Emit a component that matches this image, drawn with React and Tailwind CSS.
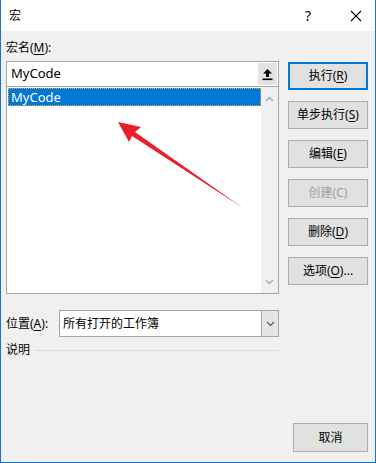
import React from 'react';

const font = { fontFamily: '"Noto Sans", "Noto Sans CJK SC", sans-serif' };

const Btn = ({ children, primary, disabled }) => (
  <button
    className={`w-[80px] h-[28px] flex items-center justify-center text-[12px] bg-[#e1e1e1] ${
      primary ? 'border-2 border-[#0078d7]' : 'border border-[#adadad]'
    } ${disabled ? 'text-[#a0a0a0]' : 'text-black'}`}
  >
    {children}
  </button>
);

const U = ({ children }) => <span className="underline underline-offset-2">{children}</span>;

const Chevron = ({ down }) => (
  <svg width="9" height="6" viewBox="0 0 9 6">
    <path d={down ? 'M1 1 L4.5 4.5 L8 1' : 'M1 5 L4.5 1.5 L8 5'} fill="none" stroke="#a6a6a6" strokeWidth="1.3" />
  </svg>
);

export default function App() {
  return (
    <div style={font} className="w-[376px] h-[463px] flex flex-col bg-[#f0f0f0] border-l border-r border-b border-[#1a73c8] text-black">
      {/* Title bar */}
      <div className="h-[31px] bg-white flex items-center pl-[8px] text-[12px]">
        <span className="flex-1">宏</span>
        <span className="w-[20px] text-center text-[14px] mr-[32px]">?</span>
        <svg width="12" height="12" viewBox="0 0 12 12" className="mr-[13px]">
          <path d="M1 1 L11 11 M11 1 L1 11" stroke="#000" strokeWidth="1.1" />
        </svg>
      </div>

      {/* Body */}
      <div className="flex-1 relative flex pl-[5px] pr-[7px]">
        <div className="w-[273px] flex flex-col">
          <div className="pt-[9px] h-[30px] leading-[16px] text-[12px]">
            宏名(<U>M</U>):
          </div>
          {/* Name input */}
          <div className="h-[26px] flex items-center bg-white border border-[#a6a6a6] pl-[4px] pr-[1px]">
            <span className="flex-1 text-[13px]">MyCode</span>
            <div className="w-[19px] h-[22px] bg-[#e3e3e3] flex items-center justify-center">
              <svg width="11" height="13" viewBox="0 0 11 13">
                <path d="M5.5 1 L10 5.5 L7 5.5 L7 9 L4 9 L4 5.5 L1 5.5 Z" fill="#000" />
                <rect x="0.5" y="10.5" width="10" height="1.6" fill="#000" />
              </svg>
            </div>
          </div>
          {/* List */}
          <div className="relative h-[207px] bg-white border border-t-0 border-[#a6a6a6] flex">
            <div className="flex-1 pt-[1px] pl-[1px]">
              <div className="h-[18px] bg-[#0078d7] border border-dotted border-[#f4a64a] text-white text-[13px] leading-[16px] pl-[2px]">
                MyCode
              </div>
            </div>
            <div className="w-[17px] bg-[#f0f0f0] flex flex-col items-center justify-between pt-[9px] pb-[8px]">
              <Chevron />
              <Chevron down />
            </div>
          </div>
          {/* Location */}
          <div className="mt-[16px] flex items-center">
            <span className="w-[53px] text-[12px]">
              位置(<U>A</U>):
            </span>
            <div className="w-[220px] h-[27px] bg-white border border-[#a6a6a6] flex items-center">
              <span className="flex-1 pl-[3px] text-[12px]">所有打开的工作簿</span>
              <div className="w-[17px] h-full bg-[#e5e5e5] border-l border-[#a6a6a6] flex items-center justify-center">
                <svg width="9" height="6" viewBox="0 0 9 6">
                  <path d="M1 1 L4.5 4.5 L8 1" fill="none" stroke="#555" strokeWidth="1.2" />
                </svg>
              </div>
            </div>
          </div>
          <div className="mt-[4px] flex items-center text-[12px]">
            <span>说明</span>
            <div className="flex-1 ml-[5px] h-px bg-[#dcdcdc]" />
          </div>
        </div>

        {/* Buttons */}
        <div className="flex-1 flex flex-col items-end pt-[31px]">
          <div className="flex flex-col gap-[11px]">
            <Btn primary>执行(<U>R</U>)</Btn>
            <Btn>单步执行(<U>S</U>)</Btn>
            <Btn>编辑(<U>E</U>)</Btn>
            <Btn disabled>创建(C)</Btn>
            <Btn>删除(<U>D</U>)</Btn>
            <Btn>选项(<U>O</U>)...</Btn>
          </div>
          <div className="flex-1" />
          <button className="w-[75px] h-[29px] mb-[10px] bg-[#e1e1e1] border border-[#adadad] text-[12px]">
            取消
          </button>
        </div>

        {/* Red annotation arrow */}
        <svg className="absolute left-0 top-0 pointer-events-none" width="376" height="432" viewBox="0 31 376 432">
          <path d="M117 122 L140 127 L134 132 L242 208 L131 136 L128 142 Z" fill="#e8202a" />
        </svg>
      </div>
    </div>
  );
}
